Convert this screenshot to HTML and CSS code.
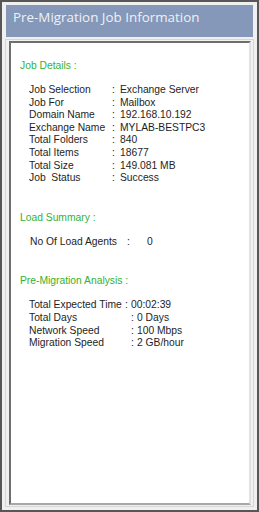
FILE: index.html
```html
<!DOCTYPE html>
<html lang="en">
<head>
<meta charset="UTF-8" />
<meta name="viewport" content="width=device-width, initial-scale=1" />
<title>Pre-Migration Job Information</title>
<link rel="stylesheet" href="styles.css">
</head>
<body>
<div class="window">
    <div class="title-bar">Pre-Migration Job Information</div>
    <div class="panel">
        <div class="panel-inner">
            <section class="section details">
                <h2>Job Details :</h2>
                <div class="row"><span class="label">Job Selection</span><span class="colon">:</span><span class="value">Exchange Server</span></div>
                <div class="row"><span class="label">Job For</span><span class="colon">:</span><span class="value">Mailbox</span></div>
                <div class="row"><span class="label">Domain Name</span><span class="colon">:</span><span class="value">192.168.10.192</span></div>
                <div class="row"><span class="label">Exchange Name</span><span class="colon">:</span><span class="value">MYLAB-BESTPC3</span></div>
                <div class="row"><span class="label">Total Folders</span><span class="colon">:</span><span class="value">840</span></div>
                <div class="row"><span class="label">Total Items</span><span class="colon">:</span><span class="value">18677</span></div>
                <div class="row"><span class="label">Total Size</span><span class="colon">:</span><span class="value">149.081 MB</span></div>
                <div class="row"><span class="label">Job&nbsp; Status</span><span class="colon">:</span><span class="value">Success</span></div>
            </section>
            <section class="section agents">
                <h2>Load Summary :</h2>
                <div class="row"><span class="label">No Of Load Agents</span><span class="colon">:</span><span class="value">0</span></div>
            </section>
            <section class="section analysis">
                <h2>Pre-Migration Analysis :</h2>
                <div class="row"><span class="label short">Total Expected Time</span><span class="colon">:</span><span class="value">00:02:39</span></div>
                <div class="row"><span class="label">Total Days</span><span class="colon">:</span><span class="value">0 Days</span></div>
                <div class="row"><span class="label">Network Speed</span><span class="colon">:</span><span class="value">100 Mbps</span></div>
                <div class="row"><span class="label">Migration Speed</span><span class="colon">:</span><span class="value">2 GB/hour</span></div>
            </section>
        </div>
    </div>
</div>
</body>
</html>
```

FILE: styles.css
```css
body {
    margin: 0;
    background-color: #ffffff;
    font-family: 'Liberation Sans', Arial, sans-serif;
}
.window {
    box-sizing: border-box;
    width: 259px;
    height: 512px;
    border: 2px solid #575757;
    background-color: #f0f0f0;
    padding: 3px 3px 3px 3px;
    display: flex;
    flex-direction: column;
}
.title-bar {
    height: 32px;
    box-sizing: border-box;
    margin: 0 1px 0 1px;
    padding: 3px 0 0 7px;
    background-color: #8598b9;
    color: #eef1f6;
    font-family: 'Open Sans', 'Noto Sans', sans-serif;
    font-size: 13.4px;
    line-height: 18px;
}
.panel {
    flex: 1;
    margin-top: 2px;
    border: 1px solid #d6d6d6;
    padding: 1px 2px 1px 3px;
    display: flex;
}
.panel-inner {
    flex: 1;
    background-color: #ffffff;
    border-top: 2px solid #6e6e6e;
    border-left: 2px solid #6e6e6e;
    border-right: 2px solid #e2e2e2;
    border-bottom: 2px solid #a8a8a8;
    padding: 16px 0 0 9px;
    font-size: 10.3px;
    line-height: 12.6px;
    color: #1e1e1e;
}
.section {
    margin-bottom: 26px;
}
h2 {
    margin: 0 0 12px 0;
    font-size: 10.3px;
    font-weight: normal;
    line-height: 13px;
    color: #33b233;
}
.row {
    display: flex;
    white-space: nowrap;
    padding-left: 9px;
}
.details .label {
    width: 83px;
}
.details .colon {
    width: 8px;
}
.agents .row {
    padding-left: 10px;
}
.agents .label {
    width: 97px;
}
.agents .colon {
    width: 20px;
}
.analysis .label {
    width: 102px;
}
.analysis .label.short {
    width: 96px;
}
.analysis .colon {
    width: 6px;
}
```
